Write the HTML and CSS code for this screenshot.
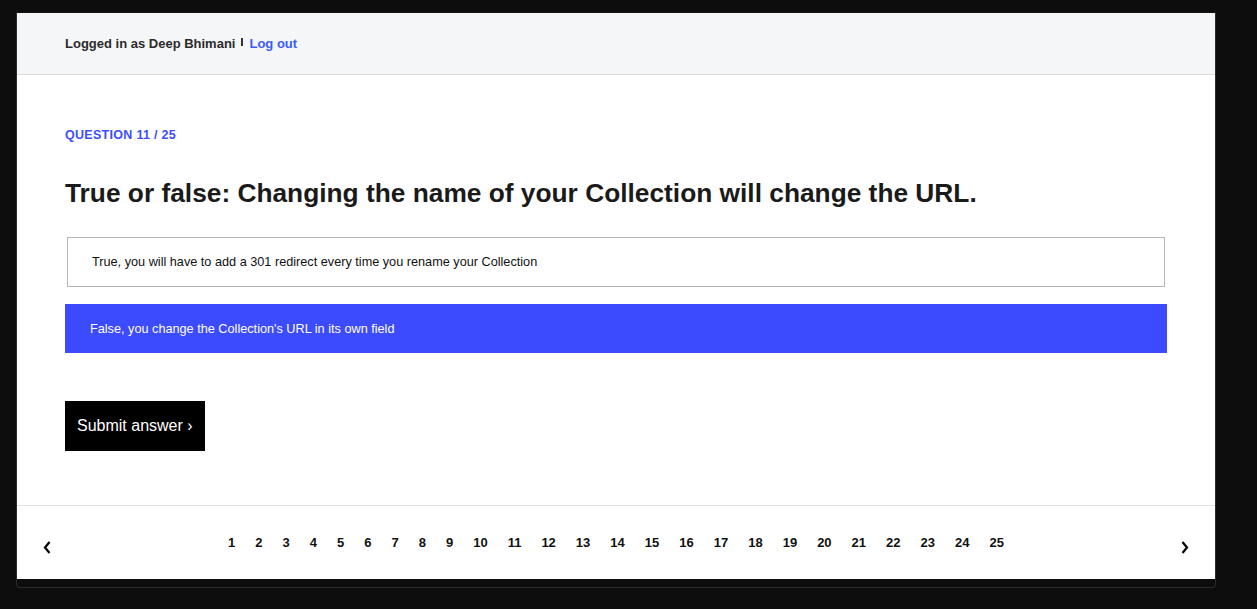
FILE: index.html
```html
<!DOCTYPE html>
<html>
<head>
<meta charset="utf-8">
<link rel="stylesheet" href="styles.css">
</head>
<body>
<div class="frame">
  <div class="panel">
    <header class="topbar">
      <span class="user">Logged in as Deep Bhimani</span>
      <span class="sep"></span>
      <a class="logout" href="#">Log out</a>
    </header>
    <main class="content">
      <div class="qlabel">QUESTION 11 / 25</div>
      <h1 class="qtitle">True or false: Changing the name of your Collection will change the URL.</h1>
      <div class="options">
        <div class="option">True, you will have to add a 301 redirect every time you rename your Collection</div>
        <div class="option selected">False, you change the Collection's URL in its own field</div>
      </div>
      <button class="submit">Submit answer ›</button>
    </main>
    <footer class="pager">
      <span class="arrow"><svg width="8" height="13" viewBox="0 0 8 13"><polyline points="6.5,1 2,6.5 6.5,12" fill="none" stroke="#000" stroke-width="2.2"/></svg></span>
      <div class="pages">
        <span class="pg">1</span><span class="pg">2</span><span class="pg">3</span><span class="pg">4</span><span class="pg">5</span><span class="pg">6</span><span class="pg">7</span><span class="pg">8</span><span class="pg">9</span><span class="pg">10</span><span class="pg">11</span><span class="pg">12</span><span class="pg">13</span><span class="pg">14</span><span class="pg">15</span><span class="pg">16</span><span class="pg">17</span><span class="pg">18</span><span class="pg">19</span><span class="pg">20</span><span class="pg">21</span><span class="pg">22</span><span class="pg">23</span><span class="pg">24</span><span class="pg">25</span>
      </div>
      <span class="arrow"><svg width="8" height="13" viewBox="0 0 8 13"><polyline points="1.5,1 6,6.5 1.5,12" fill="none" stroke="#000" stroke-width="2.2"/></svg></span>
    </footer>
  </div>
</div>
</body>
</html>
```

FILE: styles.css
```css
html, body {
  margin: 0;
  padding: 0;
  background: #0d0d0d;
  font-family: "Liberation Sans", Arial, sans-serif;
}
.frame {
  margin: 12px 0 0 16px;
  width: 1198px;
  border: 1px solid #2b2b2b;
  border-top-color: #141414;
  border-radius: 0 0 4px 4px;
  padding-bottom: 8px;
}
.panel {
  background: #fff;
}
.topbar {
  height: 61px;
  background: #f5f6f8;
  border-bottom: 1px solid #dadbdd;
  display: flex;
  align-items: center;
  padding-left: 48px;
  font-size: 13px;
  font-weight: bold;
}
.user {
  color: #2b2b2b;
}
.sep {
  display: inline-block;
  width: 2px;
  height: 8px;
  background: #333;
  margin: 0 6px 3px 6px;
}
.logout {
  color: #3b5bfd;
  text-decoration: none;
}
.content {
  padding: 53px 48px 54px 48px;
}
.qlabel {
  color: #3d4dff;
  font-size: 12.5px;
  letter-spacing: 0.3px;
  font-weight: bold;
  line-height: 14px;
}
.qtitle {
  margin: 35px 0 0 0;
  font-size: 26.3px;
  line-height: 32px;
  color: #1a1a1a;
  font-weight: bold;
}
.options {
  margin-top: 28px;
  display: flex;
  flex-direction: column;
  gap: 17px;
}
.option {
  height: 49px;
  display: flex;
  align-items: center;
  padding-left: 25px;
  font-size: 12.7px;
  color: #111;
  box-sizing: border-box;
}
.option:first-child {
  margin: 0 2px;
  border: 1px solid #b5b5b5;
  height: 50px;
  padding-left: 24px;
}
.option.selected {
  background: #3d4bff;
  color: #fff;
}
.submit {
  margin-top: 48px;
  display: block;
  background: #000;
  color: #fff;
  border: none;
  height: 50px;
  width: 140px;
  padding: 0 0 0 12px;
  text-align: left;
  font-family: "Liberation Sans", Arial, sans-serif;
  font-size: 16px;
}
.pager {
  border-top: 1px solid #e2e2e2;
  height: 73px;
  display: flex;
  align-items: center;
  justify-content: space-between;
  padding: 0 26px;
}
.arrow {
  display: flex;
  padding-top: 10px;
}
.pages {
  display: flex;
  font-size: 13px;
  font-weight: bold;
  color: #111;
}
.pg {
  padding: 0 10px;
}
```
